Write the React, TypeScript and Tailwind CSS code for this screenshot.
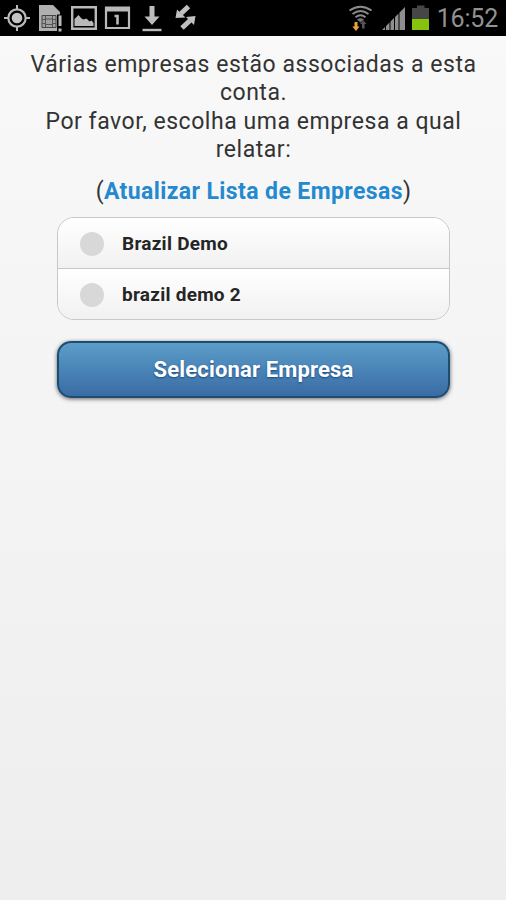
import { useState } from 'react'

// ── Config ─────────────────────────────────────────────────────────────────────

const COMPANIES = [
  { id: 'brazil-demo', name: 'Brazil Demo' },
  { id: 'brazil-demo-2', name: 'brazil demo 2' },
] as const

// ── Status bar ─────────────────────────────────────────────────────────────────

function NotificationIcons() {
  return (
    <svg width="200" height="36" viewBox="0 0 200 36" fill="none" stroke="#b9b9b9">
      {/* GPS */}
      <circle cx="17" cy="18" r="8.7" strokeWidth="2.2" />
      <circle cx="17" cy="18" r="5.3" fill="#c4c4c4" stroke="none" />
      <path d="M17 5v5M17 26v5M4 18h5M25 18h5" strokeWidth="2" />

      {/* SIM card */}
      <path d="M39 5h14l7 7v19H39z" fill="#b0b0b0" stroke="none" />
      <path d="M42 15.500h14v12H42z" fill="#a0a0a0" stroke="#444" strokeWidth="1" />
      <path d="M45.500 16v11M52.500 16v11M42 19.500h3M42 23.500h3M53 19.500h3M53 23.500h3M46 19h6M46 24.500h6" stroke="#555" strokeWidth="1" />
      <path d="M57 14.500h6v17h-6z" fill="#000" stroke="none" />
      <path d="M60 15.500v10.500M60 28.500v3" strokeWidth="3" />

      {/* Picture */}
      <path d="M72.200 7.200h23.600v21.600H72.200z" strokeWidth="2.400" />
      <path d="M74.500 26v-7l4-4 3 3.500 2 1 3-1 3 3 2-1 2 2.500v3z" fill="#b9b9b9" stroke="none" />

      {/* Calendar */}
      <path d="M106 8h23v20h-23z" strokeWidth="2.200" />
      <path d="M105 6.500h25v5h-25z" fill="#b9b9b9" stroke="none" />
      <path d="M114.500 16h3v8.500" strokeWidth="2.600" />

      {/* Download */}
      <path d="M149.500 6h5v10.500h5L152 25l-7.500-8.500h5z" fill="#bcbcbc" stroke="none" />
      <path d="M142.500 30h19" strokeWidth="2.400" />

      {/* Sync */}
      <path d="M188.500 6.500L181 13.500M182 28l8-7.500" stroke="#c0c0c0" strokeWidth="5" />
      <path d="M175.500 18l1.500-8.500 8.500 8zM195.500 16l-9.500 1 8 8z" fill="#c0c0c0" stroke="none" />
    </svg>
  )
}

function SystemIcons() {
  return (
    <svg width="84" height="36" viewBox="348 0 84 36" fill="none">
      {/* Wi-Fi with traffic arrows */}
      <g stroke="#8b8b8b" strokeWidth="2">
        <path d="M349.500 10.500q11-7.500 22 0" />
        <path d="M352.500 14q8-6 16 0" />
        <path d="M355.500 17.300q5-4 10 0" />
      </g>
      <path d="M357 19.500q3.500-2.500 7 0l-3.500 3z" fill="#777" />
      <path d="M354.500 22h3v4.500h2L356 31l-3.700-4.500h2.200z" fill="#eda23c" />
      <path d="M362 28.500V24h-2l3.300-3.500 3.300 3.500h-2v4.500z" fill="#555" />

      {/* Signal */}
      <path d="M382 30l3-3v3zM386 30v-4l3.500-3.500V30zM390.500 30v-8.500l3.500-3.500v12zM395 30V17l3.500-3.500V30zM399.500 30V12.500L405 7v23z" fill="#8e8e8e" />

      {/* Battery */}
      <path d="M412 8h5V5.500h7.500V8h4.500v11h-17z" fill="#464646" />
      <path d="M412 19h17v11h-17z" fill="#86c40c" />
    </svg>
  )
}

function StatusBar() {
  return (
    <header className="flex h-9 items-center justify-between bg-black pr-[8px]">
      <NotificationIcons />
      <div className="flex items-center gap-[5px]">
        <SystemIcons />
        <span className="pt-px text-[25px] leading-[35px] tracking-[-0.2px] text-[#929292]">16:52</span>
      </div>
    </header>
  )
}

// ── Page ───────────────────────────────────────────────────────────────────────

export default function App() {
  const [selected, setSelected] = useState<string | null>(null)

  return (
    <div className="flex h-[900px] w-[506px] flex-col overflow-hidden bg-linear-to-b from-[#f9f9f9] to-[#eeeeee] font-[Roboto,sans-serif] text-[#333]">
      <StatusBar />

      <main className="pr-[56px] pl-[57px] pt-[15px]">
        <p className="-mx-10 text-center text-[23px] leading-[28.3px] tracking-[0.54px]">
          Várias empresas estão associadas a esta
          <br />
          conta.
          <br />
          Por favor, escolha uma empresa a qual
          <br />
          relatar:
        </p>

        <p className="mt-[14px] text-center text-[23px] leading-[28px] tracking-[0.4px]">
          (
          <a href="#" className="font-bold text-[#2489ce]">
            Atualizar Lista de Empresas
          </a>
          )
        </p>

        <div className="mt-[11px] overflow-hidden rounded-[17px] border border-[#c8c8c8]">
          {COMPANIES.map((company) => (
            <button
              key={company.id}
              onClick={() => setSelected(company.id)}
              aria-pressed={selected === company.id}
              className="flex h-[51px] w-full items-center gap-[18px] border-b border-[#c8c8c8] bg-linear-to-b from-white to-[#f1f1f1] pl-[22px] pt-px text-left last:h-[50px] last:border-b-0"
            >
              <span
                className={[
                  'size-6 rounded-full',
                  selected === company.id ? 'bg-[#3a78ac]' : 'bg-[#d8d8d8]',
                ].join(' ')}
              />
              <span className="text-[19px] font-bold leading-6 tracking-[0.25px] text-[#252525]">
                {company.name}
              </span>
            </button>
          ))}
        </div>

        <button className="mt-[21px] flex h-[57px] w-full items-center justify-center rounded-[14px] border-2 border-[#1d4e72] bg-linear-to-b from-[#5b9dc9] to-[#3a6ca5] text-[22px] font-bold tracking-[0.15px] text-white shadow-[0_1px_4px_rgba(0,0,0,0.6)] [text-shadow:0_1px_2px_#194b7e]">
          Selecionar Empresa
        </button>
      </main>
    </div>
  )
}
